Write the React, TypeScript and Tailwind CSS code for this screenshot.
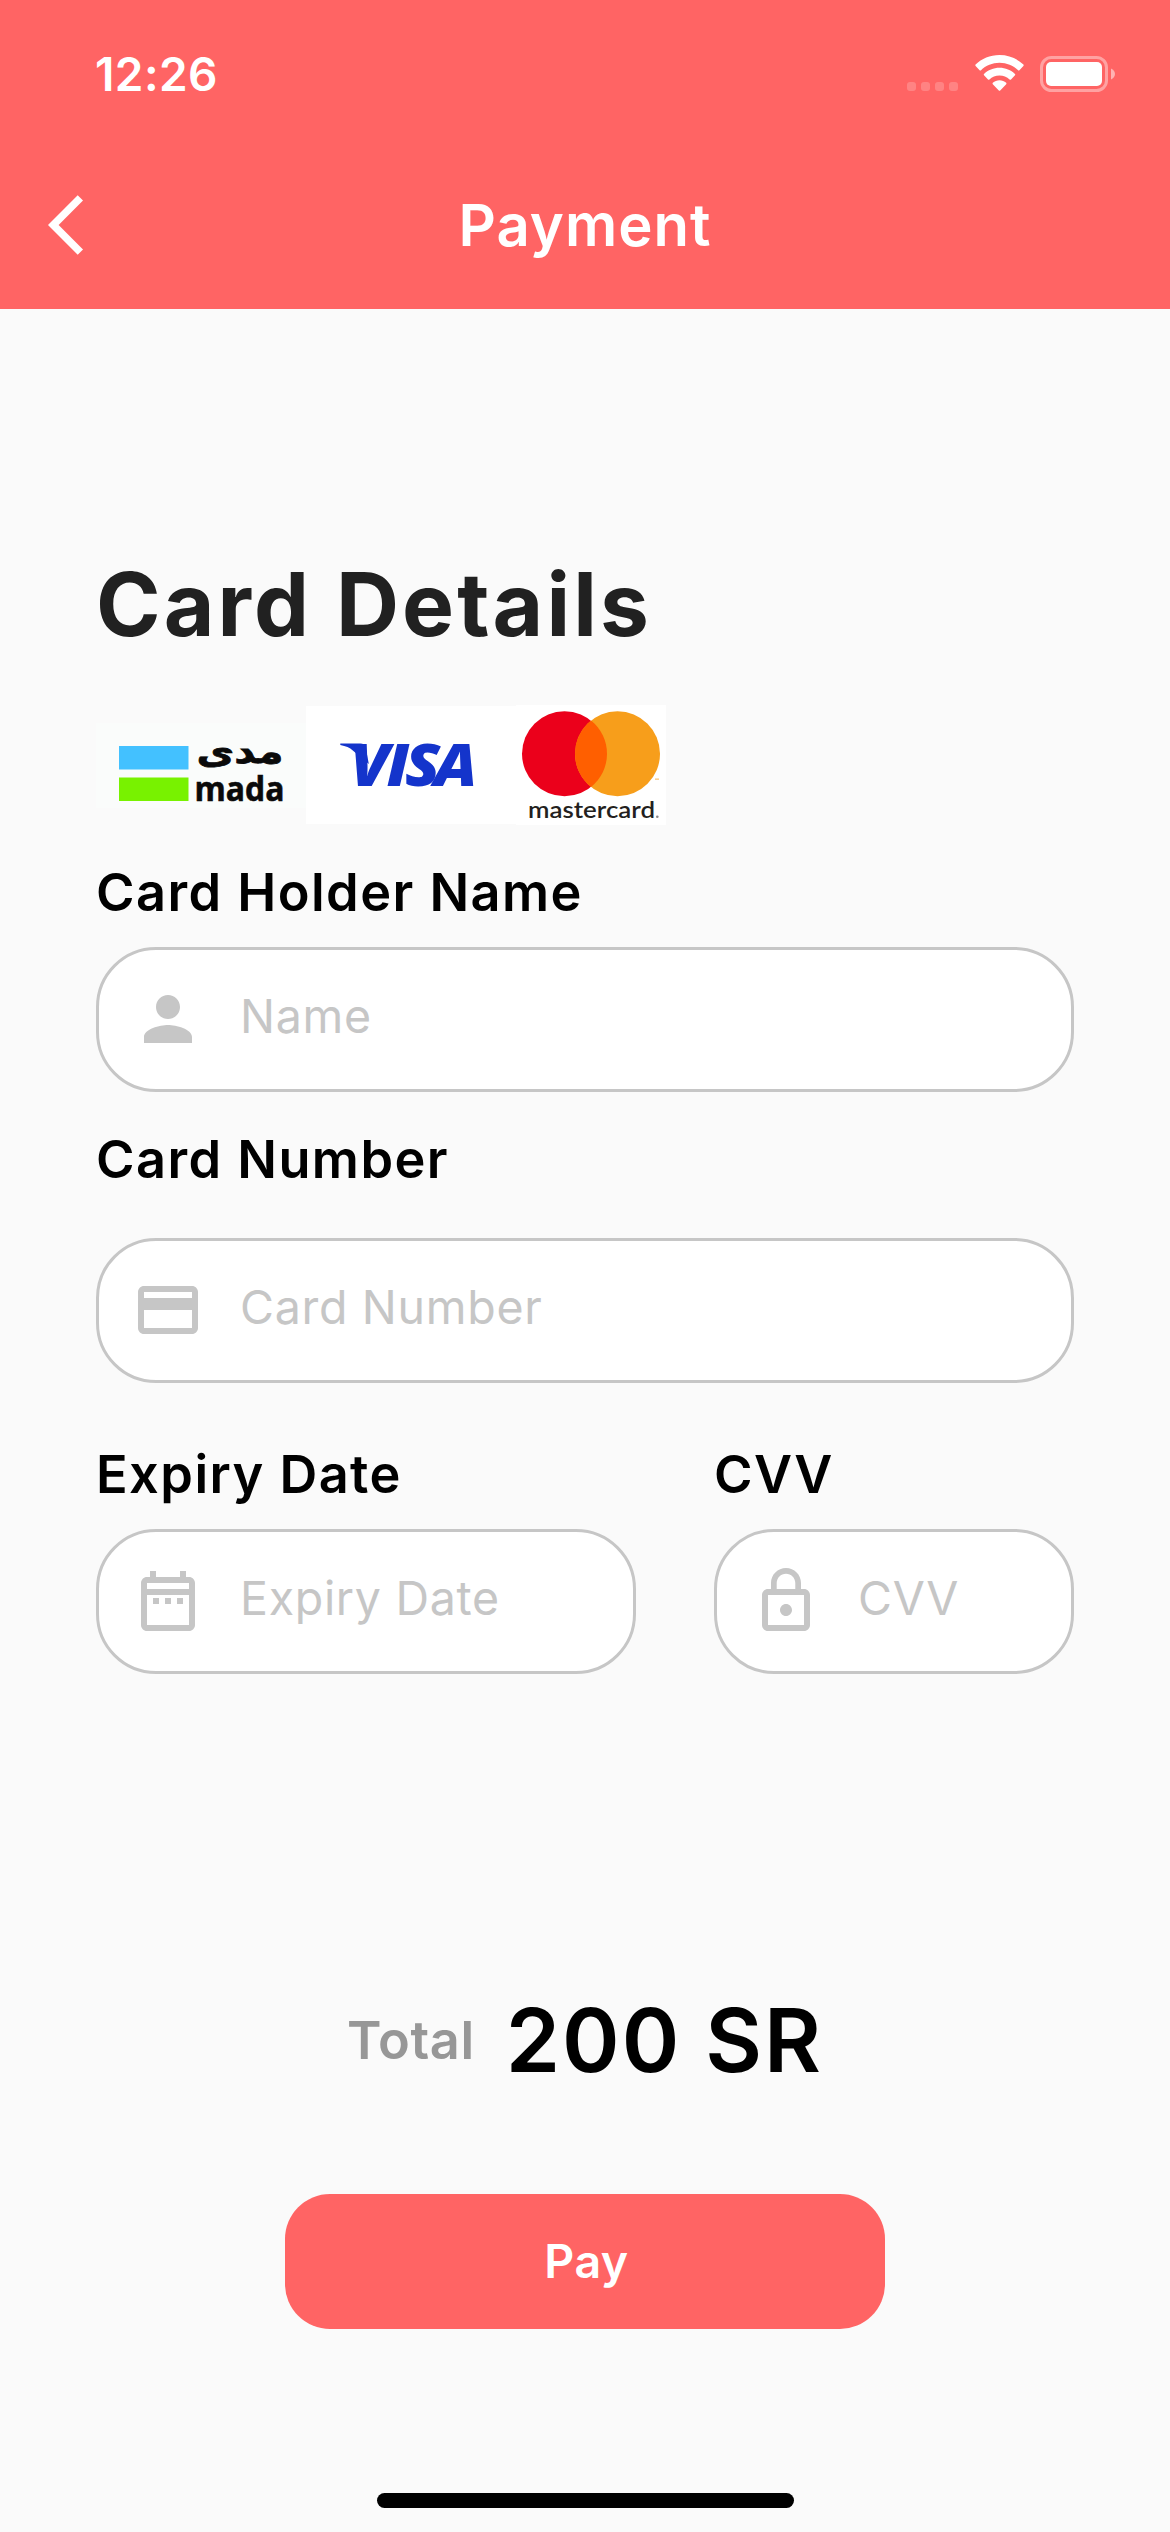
import type { ReactNode } from "react";

function Icon({ d }: { d: string }) {
  return (
    <svg className="size-[72px] shrink-0" viewBox="0 0 24 24" fill="currentColor" aria-hidden="true">
      <path d={d} />
    </svg>
  );
}

const icons = {
  back: "M11.67 3.87 9.9 2.1 0 12l9.9 9.9 1.77-1.77L3.54 12z",
  person:
    "M12 12c2.21 0 4-1.79 4-4s-1.79-4-4-4-4 1.79-4 4 1.79 4 4 4zm0 2c-2.67 0-8 1.34-8 4v2h16v-2c0-2.66-5.33-4-8-4z",
  card: "M20 4H4c-1.11 0-1.99.89-1.99 2L2 18c0 1.11.89 2 2 2h16c1.11 0 2-.89 2-2V6c0-1.11-.89-2-2-2zm0 14H4v-6h16v6zm0-10H4V6h16v2z",
  calendar:
    "M7 11h2v2H7v-2zm14-5v14c0 1.1-.9 2-2 2H5c-1.11 0-2-.9-2-2l.01-14c0-1.1.88-2 1.99-2h1V2h2v2h8V2h2v2h1c1.1 0 2 .9 2 2zM5 8h14V6H5v2zm14 12V10H5v10h14zm-4-7h2v-2h-2v2zm-4 0h2v-2h-2v2z",
  lock: "M12 17c1.1 0 2-.9 2-2s-.9-2-2-2-2 .9-2 2 .9 2 2 2zm6-9h-1V6c0-2.76-2.24-5-5-5S7 3.24 7 6v2H6c-1.1 0-2 .9-2 2v10c0 1.1.9 2 2 2h12c1.1 0 2-.9 2-2V10c0-1.1-.9-2-2-2zM8.9 6c0-1.71 1.39-3.1 3.1-3.1s3.1 1.39 3.1 3.1v2H8.9V6zM18 20H6V10h12v10z",
};

function StatusBar() {
  return (
    <div className="flex h-[141px] items-center justify-between pt-[7px] pl-[95px] pr-[54px]">
      <span className="text-[46px] leading-[56px] font-semibold tracking-[0.4px]">12:26</span>
      <div className="flex items-center">
        <div className="mt-[25px] flex gap-[5px]">
          {[0, 1, 2, 3].map((i) => (
            <span key={i} className="size-[9px] rounded-[3px] bg-white/20" />
          ))}
        </div>
        <svg className="ml-[17px] h-[36px] w-[49px] -translate-y-[1px]" viewBox="0 0 49 36" fill="#fff" aria-hidden="true">
          <path d="M24.5 0C34 0 42.300 3.700 48.400 9.600c.4.4.4 1 0 1.400l-4 4.200c-.4.400-1 .400-1.400 0C38.200 10.600 31.700 7.800 24.500 7.800S10.800 10.600 6 15.200c-.4.400-1 .400-1.400 0l-4-4.200c-.4-.4-.4-1 0-1.400C6.700 3.700 15 0 24.500 0z" />
          <path d="M24.500 12.800c6 0 11.400 2.300 15.500 6.100.4.400.4 1 0 1.400l-4 4.100c-.4.400-1 .4-1.400 0-2.700-2.400-6.200-3.800-10.100-3.800s-7.400 1.400-10.100 3.800c-.4.400-1 .4-1.400 0l-4-4.100c-.4-.4-.4-1 0-1.400 4.100-3.800 9.500-6.100 15.500-6.100z" />
          <path d="M24.500 25.300c2.500 0 4.900.9 6.700 2.500.4.400.4 1 0 1.400l-6 6.300c-.4.400-1 .4-1.400 0l-6-6.300c-.4-.4-.4-1 0-1.400 1.800-1.600 4.200-2.500 6.700-2.500z" />
        </svg>
        <svg className="ml-[16px] h-[36px] w-[76px]" viewBox="0 0 76 36" aria-hidden="true">
          <rect x="1.500" y="1.500" width="65" height="33" rx="10" fill="none" stroke="#fff" strokeOpacity=".4" strokeWidth="3" />
          <rect x="6" y="6" width="56" height="24" rx="5" fill="#fff" />
          <path d="M71 12.500c2.400 1 4 3.100 4 5.500s-1.600 4.500-4 5.500z" fill="#fff" fillOpacity=".5" />
        </svg>
      </div>
    </div>
  );
}

function MadaLogo() {
  return (
    <svg className="h-[85px] w-[210px] overflow-visible bg-[#fafcfb]" viewBox="96 722 210 85">
      <rect x="119" y="745" width="69.500" height="23.500" fill="#43c1ff" />
      <rect x="119" y="776.500" width="69.500" height="23.500" fill="#78f200" />
      <text x="283.500" y="761.500" direction="rtl" fontFamily="'DejaVu Sans', sans-serif" fontWeight="700" fontSize="34" textLength="87" lengthAdjust="spacingAndGlyphs" fill="#0a0a0a" stroke="#0a0a0a" strokeWidth="0.800">
        مدى
      </text>
      <text x="194.500" y="799.500" fontFamily="'Open Sans', sans-serif" fontWeight="700" fontSize="34" textLength="90" lengthAdjust="spacingAndGlyphs" fill="#0a0a0a" stroke="#0a0a0a" strokeWidth="0.600">
        mada
      </text>
    </svg>
  );
}

function VisaLogo() {
  return (
    <svg className="h-[118px] w-[210px] bg-white" viewBox="306 706 210 118">
      <path d="M340.300 743.500h20c3 0 5 1.500 5.500 4.500l3 16-16-13.500c-3-2.800-7-4.500-12.500-5.500z" fill="#1434cb" />
      <text transform="translate(350 785.500) scale(1.090 1)" x="0 33.500 50.500 77" y="0" fontFamily="'Open Sans', sans-serif" fontStyle="italic" fontWeight="800" fontSize="59" fill="#1434cb">
        VISA
      </text>
    </svg>
  );
}

function MastercardLogo() {
  return (
    <svg className="h-[120px] w-[150px] bg-white" viewBox="516 705 150 120">
      <circle cx="564.500" cy="753.700" r="42.500" fill="#eb001b" />
      <circle cx="617.500" cy="753.700" r="42.500" fill="#f79e1b" />
      <path d="M591 720.480a42.500 42.500 0 0 1 0 66.440a42.500 42.500 0 0 1 0-66.440z" fill="#ff5f00" />
      <text x="528" y="817.500" fontFamily="Lato, sans-serif" fontWeight="600" fontSize="23" textLength="127" lengthAdjust="spacingAndGlyphs" fill="#231f20">
        mastercard
      </text>
      <circle cx="657.300" cy="816.800" r="1.300" fill="#8a8889" />
      <path d="M655 778.500h4v1.300h-4z" fill="#f9c377" />
    </svg>
  );
}

function Label({ children }: { children: ReactNode }) {
  return <div className="text-[52.3px] leading-[64px] font-semibold tracking-[1.45px] text-black">{children}</div>;
}

function Field({ icon, placeholder }: { icon: string; placeholder: string }) {
  return (
    <label className="flex h-[145px] w-full items-center gap-[36px] rounded-[60px] border-[3px] border-[#c6c6c6] bg-white pr-[24px] pb-[1px] pl-[33px] text-[#c6c6c6]">
      <Icon d={icon} />
      <input
        className="mb-[7px] w-full min-w-0 bg-transparent text-[46.5px] leading-[60px] tracking-[0.7px] text-black outline-none placeholder:text-[#c6c6c6]"
        placeholder={placeholder}
      />
    </label>
  );
}

export default function App() {
  return (
    <div className="flex h-[2532px] w-[1170px] flex-col bg-[#fafafa] font-['Inter',sans-serif]">
      <header className="h-[309px] bg-[#ff6464] text-white">
        <StatusBar />
        <div className="grid h-[168px] grid-cols-[1fr_auto_1fr] items-center px-[48px]">
          <button aria-label="Back" className="w-[72px]">
            <Icon d={icons.back} />
          </button>
          <h1 className="text-[58px] leading-[70px] font-semibold tracking-[1px]">Payment</h1>
        </div>
      </header>

      <main className="flex flex-col px-[96px] pt-[241px]">
        <h2 className="text-[87.3px] leading-[108px] font-bold tracking-[3.1px] text-[#212121]">Card Details</h2>

        <div className="mt-[47px] flex h-[120px] items-center">
          <MadaLogo />
          <VisaLogo />
          <MastercardLogo />
        </div>

        <div className="mt-[35px] flex flex-col gap-[23px]">
          <Label>Card Holder Name</Label>
          <Field icon={icons.person} placeholder="Name" />
        </div>

        <div className="mt-[35px] flex flex-col gap-[47px]">
          <Label>Card Number</Label>
          <Field icon={icons.card} placeholder="Card Number" />
        </div>

        <div className="mt-[59px] flex justify-between">
          <div className="flex w-[540px] flex-col gap-[23px]">
            <Label>Expiry Date</Label>
            <Field icon={icons.calendar} placeholder="Expiry Date" />
          </div>
          <div className="flex w-[360px] flex-col gap-[23px]">
            <Label>CVV</Label>
            <Field icon={icons.lock} placeholder="CVV" />
          </div>
        </div>

        <div className="mt-[312px] flex items-center justify-center gap-[31px]">
          <span className="text-[52.3px] leading-[64px] font-semibold tracking-[0.6px] text-[#979797]">Total</span>
          <span className="text-[87.3px] leading-[108px] font-semibold tracking-[2px] text-black">200 SR</span>
        </div>

        <button className="mt-[100px] h-[135px] w-[600px] self-center rounded-[45px] bg-[#ff6464] pl-[3px] text-[46.5px] font-semibold tracking-[0.5px] text-white">
          Pay
        </button>
      </main>

      <div className="mt-[164px] h-[15px] w-[417px] self-center rounded-full bg-black" />
    </div>
  );
}
